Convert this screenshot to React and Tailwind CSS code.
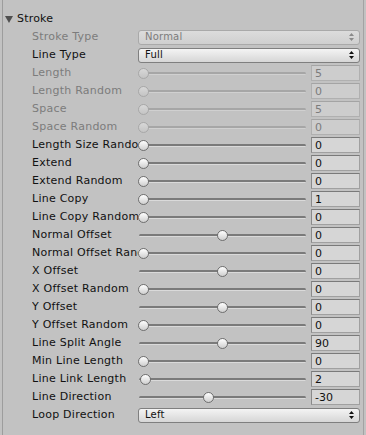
import React from 'react';

const rows = [
    { label: 'Stroke Type', type: 'select', value: 'Normal', disabled: true },
    { label: 'Line Type', type: 'select', value: 'Full' },
    { label: 'Length', type: 'slider', value: '5', pos: 0, disabled: true },
    { label: 'Length Random', type: 'slider', value: '0', pos: 0, disabled: true },
    { label: 'Space', type: 'slider', value: '5', pos: 0, disabled: true },
    { label: 'Space Random', type: 'slider', value: '0', pos: 0, disabled: true },
    { label: 'Length Size Random', type: 'slider', value: '0', pos: 0 },
    { label: 'Extend', type: 'slider', value: '0', pos: 0 },
    { label: 'Extend Random', type: 'slider', value: '0', pos: 0 },
    { label: 'Line Copy', type: 'slider', value: '1', pos: 0 },
    { label: 'Line Copy Random', type: 'slider', value: '0', pos: 0 },
    { label: 'Normal Offset', type: 'slider', value: '0', pos: 0.5 },
    { label: 'Normal Offset Random', type: 'slider', value: '0', pos: 0 },
    { label: 'X Offset', type: 'slider', value: '0', pos: 0.5 },
    { label: 'X Offset Random', type: 'slider', value: '0', pos: 0 },
    { label: 'Y Offset', type: 'slider', value: '0', pos: 0.5 },
    { label: 'Y Offset Random', type: 'slider', value: '0', pos: 0 },
    { label: 'Line Split Angle', type: 'slider', value: '90', pos: 0.5 },
    { label: 'Min Line Length', type: 'slider', value: '0', pos: 0 },
    { label: 'Line Link Length', type: 'slider', value: '2', pos: 0.015 },
    { label: 'Line Direction', type: 'slider', value: '-30', pos: 0.4167 },
    { label: 'Loop Direction', type: 'select', value: 'Left' },
];

const Arrows = ({ disabled }) => (
    <svg width="5" height="8" viewBox="0 0 5 8" className="shrink-0">
        <path d="M2.5 0 L5 3 L0 3 Z M0 5 L5 5 L2.5 8 Z" fill={disabled ? '#8a8a8a' : '#111'} />
    </svg>
);

const Select = ({ value, disabled }) => (
    <div className={`flex-1 h-[15px] rounded-[3px] border flex items-center justify-between pl-[6px] pr-[5px] ${disabled ? 'border-[#a9a9a9] bg-gradient-to-b from-[#dcdcdc] to-[#cfcfcf] text-[#7c7c7c]' : 'border-[#7f7f7f] bg-gradient-to-b from-[#f4f4f4] to-[#d6d6d6] text-[#111]'}`}>
        <span className="text-[10px] leading-none tracking-[0.2px]">{value}</span>
        <Arrows disabled={disabled} />
    </div>
);

const Slider = ({ value, pos, disabled }) => (
    <div className="flex-1 flex items-center gap-[5px]">
        <div className="relative flex-1 h-[16px]">
            <div className={`absolute left-[1px] right-0 top-[7px] h-[3px] rounded-full ${disabled ? 'bg-[#a6a6a6] border-b border-[#d0d0d0]' : 'bg-[#7a7a7a] border-b border-[#dadada]'}`} />
            <div
                className={`absolute top-[3px] w-[11px] h-[11px] rounded-full border ${disabled ? 'border-[#a8a8a8] bg-gradient-to-b from-[#d8d8d8] to-[#c4c4c4]' : 'border-[#6f6f6f] bg-gradient-to-b from-[#ffffff] to-[#cfcfcf]'}`}
                style={{ left: `calc(${pos} * (100% - 11px))` }}
            />
        </div>
        <div className={`w-[49px] h-[16px] border flex items-center pl-[3px] text-[11px] leading-none ${disabled ? 'border-[#b0b0b0] border-t-[#a4a4a4] bg-[#cdcdcd] text-[#7c7c7c]' : 'border-[#a0a0a0] border-t-[#7a7a7a] border-l-[#8a8a8a] bg-[#d6d6d6] text-[#111]'}`}>
            {value}
        </div>
    </div>
);

export default function App() {
    return (
        <div className="w-[366px] h-[435px] bg-[#c2c2c2] relative overflow-hidden" style={{ fontFamily: '"DejaVu Sans", Verdana, sans-serif' }}>
            <div className="absolute left-[2px] top-0 bottom-0 w-px bg-[#9d9d9d]" />
            <div className="absolute right-[2px] top-0 bottom-0 w-px bg-[#a3a3a3]" />
            <div className="pt-[10px] pr-[6px]">
                <div className="h-[18px] flex items-center pl-[5px] gap-[4px]">
                    <svg width="8" height="7" viewBox="0 0 8 7">
                        <path d="M0 0 L8 0 L4 7 Z" fill="#505050" />
                    </svg>
                    <span className="text-[11px] text-[#111] tracking-[0.2px]">Stroke</span>
                </div>
                {rows.map((r) => (
                    <div key={r.label} className="h-[18px] flex items-center pl-[32px]">
                        <span className={`w-[106px] shrink-0 overflow-hidden whitespace-nowrap text-[11px] tracking-[0.25px] ${r.disabled ? 'text-[#7c7c7c]' : 'text-[#111]'}`}>
                            {r.label}
                        </span>
                        {r.type === 'select' ? (
                            <Select value={r.value} disabled={r.disabled} />
                        ) : (
                            <Slider value={r.value} pos={r.pos} disabled={r.disabled} />
                        )}
                    </div>
                ))}
            </div>
        </div>
    );
}
